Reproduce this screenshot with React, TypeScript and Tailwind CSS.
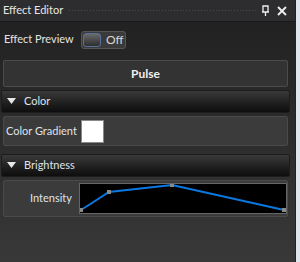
import React from 'react';

const font = { fontFamily: 'Lato, "Noto Sans", sans-serif' };

function SectionHeader({ title }: { title: string }) {
  return (
    <div className="mx-[1px] flex h-[23px] items-center rounded-[2px] border border-[#1c1c1c] bg-gradient-to-b from-[#3a3a3a] to-[#0e0e0e] pl-[5px] text-[11px] text-[#dfe4ea]">
      <svg width="9" height="7" viewBox="0 0 9 7" className="mr-[8px]">
        <polygon points="0,0 9,0 4.5,6" fill="#e8e8e8" />
      </svg>
      {title}
    </div>
  );
}

function Chart() {
  const pts = [
    [1, 26],
    [29, 8],
    [92, 1],
    [204, 26],
  ];
  return (
    <div className="h-[31px] w-[208px] border border-[#666] bg-black">
      <svg width="206" height="29" viewBox="0 0 206 29">
        <polyline
          points={pts.map((p) => p.join(',')).join(' ')}
          fill="none"
          stroke="#0a78e0"
          strokeWidth="2"
        />
        {pts.map((p, i) => (
          <rect key={i} x={p[0] - 2} y={p[1] - 2} width="4" height="4" fill="#8a8a8a" />
        ))}
      </svg>
    </div>
  );
}

export default function App() {
  return (
    <div className="flex h-[262px] w-[300px] bg-[#dde5ee]" style={font}>
      <div className="flex w-[296px] flex-col border-r border-[#222] bg-[#2b2b2b]">
        {/* title bar */}
        <div className="flex h-[22px] items-center border-b border-[#1a1a1a] bg-[#2d2d2f] pl-[3px] pr-[8px] text-[11px] text-[#e6e6e6]">
          <span className="whitespace-nowrap">Effect Editor</span>
          <div className="mx-[5px] h-[4px] flex-1 bg-[radial-gradient(circle,#4a4a4a_1px,transparent_1px)] bg-[length:3px_3px]" />
          <svg width="10" height="12" viewBox="0 0 10 12" className="mr-[6px]">
            <path d="M2 1h5v6H2z M1 7h7 M4.5 7v4" stroke="#f0f0f0" strokeWidth="1.3" fill="none" />
          </svg>
          <svg width="10" height="10" viewBox="0 0 10 10">
            <path d="M1 1l8 8M9 1l-8 8" stroke="#f0f0f0" strokeWidth="1.8" />
          </svg>
        </div>

        <div className="flex flex-1 bg-gradient-to-b from-[#222] to-[#383838] pr-[4px]">
          <div className="flex flex-1 flex-col gap-[3px]">
            {/* effect preview */}
            <div className="flex h-[35px] items-center pl-[4px] text-[11px] text-[#e4e4e4]">
              <span className="w-[77px] whitespace-nowrap">Effect Preview</span>
              <div className="flex h-[18px] w-[45px] items-center rounded-[3px] border border-[#555] bg-[#3a3a3a]">
                <div className="ml-[1px] h-[14px] w-[18px] rounded-[3px] border border-[#5a6f9a] bg-gradient-to-b from-[#6a6a6a] to-[#2e2e2e]" />
                <span className="ml-[5px] text-[12px] text-[#d8d8d8]">Off</span>
              </div>
            </div>

            {/* pulse */}
            <div className="mx-[3px] flex h-[27px] items-center justify-center rounded-[2px] border border-[#4c4c4c] bg-[#333] text-[12px] font-bold text-[#f0f0f0]">
              Pulse
            </div>

            <SectionHeader title="Color" />
            <div className="mx-[3px] flex h-[30px] items-center rounded-[2px] border border-[#4a4a4a] bg-[#3b3b3b] pl-[2px] text-[11px] text-[#dfe4ea]">
              <span className="w-[75px] whitespace-nowrap">Color Gradient</span>
              <div className="h-[23px] w-[23px] border border-[#888] bg-white" />
            </div>

            <div className="h-[2px]" />
            <SectionHeader title="Brightness" />
            <div className="mx-[3px] flex h-[37px] items-center rounded-[2px] border border-[#4a4a4a] bg-[#3b3b3b] text-[11px] text-[#dfe4ea]">
              <span className="w-[70px] pr-[2px] text-right">Intensity</span>
              <div className="ml-[5px]">
                <Chart />
              </div>
            </div>
          </div>
        </div>
      </div>
    </div>
  );
}
